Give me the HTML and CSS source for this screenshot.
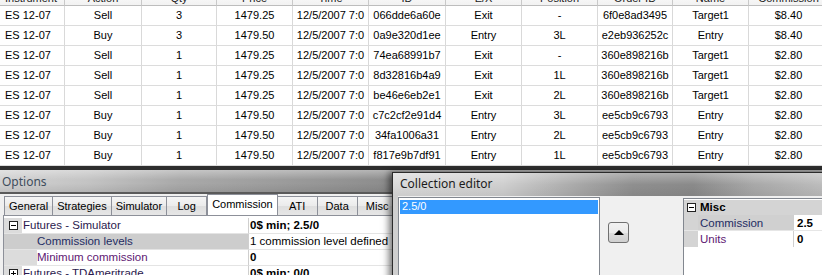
FILE: index.html
```html
<!DOCTYPE html>
<html>
<head>
<meta charset="utf-8">
<link rel="stylesheet" href="styles.css">
</head>
<body>
<div class="list">
  <div class="lrow lhead">
    <span class="l">Instrument</span><span>Action</span><span>Qty</span><span>Price</span><span>Time</span><span>ID</span><span>E/X</span><span>Position</span><span>Order ID</span><span>Name</span><span>Commission</span>
  </div>
  <div class="lrow"><span class="l">ES 12-07</span><span>Sell</span><span>3</span><span>1479.25</span><span>12/5/2007 7:0</span><span>066dde6a60e</span><span>Exit</span><span>-</span><span>6f0e8ad3495</span><span>Target1</span><span>$8.40</span></div>
  <div class="lrow"><span class="l">ES 12-07</span><span>Buy</span><span>3</span><span>1479.50</span><span>12/5/2007 7:0</span><span>0a9e320d1ee</span><span>Entry</span><span>3L</span><span>e2eb936252c</span><span>Entry</span><span>$8.40</span></div>
  <div class="lrow"><span class="l">ES 12-07</span><span>Sell</span><span>1</span><span>1479.25</span><span>12/5/2007 7:0</span><span>74ea68991b7</span><span>Exit</span><span>-</span><span>360e898216b</span><span>Target1</span><span>$2.80</span></div>
  <div class="lrow"><span class="l">ES 12-07</span><span>Sell</span><span>1</span><span>1479.25</span><span>12/5/2007 7:0</span><span>8d32816b4a9</span><span>Exit</span><span>1L</span><span>360e898216b</span><span>Target1</span><span>$2.80</span></div>
  <div class="lrow"><span class="l">ES 12-07</span><span>Sell</span><span>1</span><span>1479.25</span><span>12/5/2007 7:0</span><span>be46e6eb2e1</span><span>Exit</span><span>2L</span><span>360e898216b</span><span>Target1</span><span>$2.80</span></div>
  <div class="lrow"><span class="l">ES 12-07</span><span>Buy</span><span>1</span><span>1479.50</span><span>12/5/2007 7:0</span><span>c7c2cf2e91d4</span><span>Entry</span><span>3L</span><span>ee5cb9c6793</span><span>Entry</span><span>$2.80</span></div>
  <div class="lrow"><span class="l">ES 12-07</span><span>Buy</span><span>1</span><span>1479.50</span><span>12/5/2007 7:0</span><span>34fa1006a31</span><span>Entry</span><span>2L</span><span>ee5cb9c6793</span><span>Entry</span><span>$2.80</span></div>
  <div class="lrow"><span class="l">ES 12-07</span><span>Buy</span><span>1</span><span>1479.50</span><span>12/5/2007 7:0</span><span>f817e9b7df91</span><span>Entry</span><span>1L</span><span>ee5cb9c6793</span><span>Entry</span><span>$2.80</span></div>
</div>

<div class="desk">
  <section class="options">
    <div class="otitle">Options</div>
    <div class="tabs">
      <span class="tab">General</span>
      <span class="tab">Strategies</span>
      <span class="tab">Simulator</span>
      <span class="tab">Log</span>
      <span class="tab sel">Commission</span>
      <span class="tab">ATI</span>
      <span class="tab">Data</span>
      <span class="tab">Misc</span>
    </div>
    <div class="pgrid">
      <div class="prow cat">
        <span class="pm"><i class="box"></i></span>
        <span class="pl">Futures - Simulator</span>
        <span class="pv b">0$ min; 2.5/0</span>
      </div>
      <div class="prow sub selrow">
        <span class="pm"></span>
        <span class="pl">Commission levels</span>
        <span class="pv">1 commission level defined</span>
      </div>
      <div class="prow sub">
        <span class="pm"></span>
        <span class="pl">Minimum commission</span>
        <span class="pv b">0</span>
      </div>
      <div class="prow cat">
        <span class="pm"><i class="box plus"></i></span>
        <span class="pl">Futures - TDAmeritrade</span>
        <span class="pv b">0$ min; 0/0</span>
      </div>
    </div>
  </section>

  <section class="coll">
    <div class="ctitle">Collection editor</div>
    <div class="cbody">
      <div class="clist">
        <div class="citem">2.5/0</div>
      </div>
      <div class="cmid">
        <button class="upbtn" type="button"><span class="tri"></span></button>
      </div>
      <div class="cgrid">
        <div class="crow ccat">
          <span class="cm"><i class="box"></i></span>
          <span class="cl b">Misc</span>
        </div>
        <div class="crow csel">
          <span class="cm"></span>
          <span class="cl">Commission</span>
          <span class="cv b">2.5</span>
        </div>
        <div class="crow">
          <span class="cm"></span>
          <span class="cl">Units</span>
          <span class="cv b">0</span>
        </div>
      </div>
    </div>
  </section>
</div>
</body>
</html>
```

FILE: styles.css
```css
* { box-sizing: border-box; margin: 0; padding: 0; }
html, body { width: 822px; height: 275px; overflow: hidden; background: #fff; }
body {
  font-family: "Liberation Sans", Arial, sans-serif;
  font-size: 11px;
  color: #000;
}

/* ---------- trade list ---------- */
.list { display: flex; flex-direction: column; margin-top: -13px; }
.lrow {
  display: grid;
  grid-template-columns: 65px 77px 75px 76px 76px 77px 76px 76px 75px 76px 80px;
  height: 20px;
}
.lrow > span {
  border-right: 1px solid #d9d9d9;
  border-bottom: 1px solid #dcdcdc;
  line-height: 19px;
  text-align: center;
  white-space: nowrap;
  overflow: hidden;
}
.lrow > span.l { text-align: left; padding-left: 5px; }
.lhead { height: 19px; }
.lhead > span {
  background: linear-gradient(#ffffff, #f2f2f2);
  border-right-color: #c9c9c9;
  border-bottom: 1px solid #bdbdbd;
  line-height: 23px;
  color: #222;
}

/* ---------- desktop area ---------- */
.desk { position: relative; height: 109px; }

.options {
  height: 100%;
  background: #f0f0f0;
  border-top: 4px solid #2e2e2e;
  display: flex;
  flex-direction: column;
}
.otitle {
  height: 24px;
  line-height: 23px;
  padding-left: 2px;
  font-family: "Noto Sans", "Open Sans", sans-serif;
  font-size: 12px;
  color: #3f4d5c;
  background:
    linear-gradient(rgba(255,255,255,.35), rgba(255,255,255,0) 45%, rgba(0,0,0,0) 60%, rgba(0,0,0,.08)),
    linear-gradient(to right, #d2d2d2 0, #c3c3c3 90px, #a9a9a9 180px, #9c9c9c 280px, #8c8c8c 392px);
  border-bottom: 2px solid #5a5a5a;
}
.tabs {
  display: flex;
  align-items: flex-end;
  height: 23px;
  padding-left: 4px;
}
.tab {
  height: 19px;
  min-width: 40px;
  padding: 0 4px;
  line-height: 18px;
  text-align: center;
  white-space: nowrap;
  border: 1px solid #8d9099;
  border-bottom: none;
  border-left-width: 0;
  background: linear-gradient(#f5f5f5, #ebebeb 50%, #dedede 51%, #e6e6e6);
}
.tab:first-child { border-left-width: 1px; }
.tab.sel {
  height: 21px;
  line-height: 18px;
  background: #fff;
  border-left-width: 1px;
  padding-bottom: 2px;
  position: relative;
  z-index: 1;
}
.pgrid {
  margin-left: 3px;
  border: 1px solid #8d9099;
  background: #fff;
  padding-top: 2px;
  flex: 1;
  font-size: 11.5px;
}
.prow {
  display: grid;
  grid-template-columns: 18px 226px 1fr;
  height: 16px;
  line-height: 15px;
}
.prow > span { border-bottom: 1px solid #e4e4e4; white-space: nowrap; overflow: hidden; }
.pm { background: #dcdcdc; display: flex; align-items: center; justify-content: center; }
.pl { padding-left: 1px; color: #2b1a4e; }
.pv { border-left: 1px solid #cfcfcf; padding-left: 1px; }
.sub .pl { padding-left: 15px; color: #5e1873; }
.sub .pm { width: 33px; }
.selrow .pm, .selrow .pl { background: #cdcdcd; }
.selrow .pl { color: #1f2c63; }
.b { font-weight: bold; }

.box {
  display: block;
  width: 9px;
  height: 9px;
  border: 1px solid #222;
  background: #fff;
  position: relative;
}
.box::after {
  content: "";
  position: absolute;
  left: 1px; right: 1px; top: 3px;
  height: 1px;
  background: #000;
}
.box.plus::before {
  content: "";
  position: absolute;
  top: 1px; bottom: 1px; left: 3px;
  width: 1px;
  background: #000;
}

/* ---------- collection editor (floating window) ---------- */
.coll {
  position: absolute;
  left: 392px;
  top: 6px;
  width: 440px;
  height: 110px;
  border: 1px solid #2b2b2b;
  background: #f0f0f0;
  box-shadow: -3px 0 7px rgba(0,0,0,.55);
  display: flex;
  flex-direction: column;
}
.ctitle {
  height: 23px;
  line-height: 22px;
  padding-left: 7px;
  font-family: "Noto Sans", "Open Sans", sans-serif;
  font-size: 12px;
  color: #1c1c1c;
  background:
    linear-gradient(rgba(255,255,255,.3), rgba(255,255,255,0) 50%, rgba(0,0,0,.06)),
    linear-gradient(to right, #dadada 0, #cfcfcf 110px, #a6a6a6 190px, #8f8f8f 240px, #8a8a8a 300px, #a8a8a8 360px, #bdbdbd 430px);
}
.cbody {
  flex: 1;
  display: flex;
  padding: 1px 0 0 5px;
  background: linear-gradient(to right, #cfcfcf 0, #cfcfcf 5px, #f0f0f0 5px);
}
.clist {
  width: 202px;
  border: 1px solid #82878f;
  background: #fff;
  padding: 2px 1px 0;
}
.citem {
  height: 14px;
  line-height: 13px;
  padding-left: 2px;
  background: #3399ff;
  color: #fff;
}
.cmid {
  width: 83px;
  padding: 25px 0 0 8px;
}
.upbtn {
  display: flex;
  align-items: center;
  justify-content: center;
  width: 21px;
  height: 21px;
  border: 1px solid #707070;
  border-radius: 3px;
  background: linear-gradient(#f2f2f2, #ebebeb 50%, #dddddd 51%, #cfcfcf);
}
.tri {
  width: 0; height: 0;
  border-left: 5px solid transparent;
  border-right: 5px solid transparent;
  border-bottom: 5px solid #000;
}
.cgrid {
  flex: 1;
  margin-top: 1px;
  border-left: 1px solid #82878f;
  border-top: 1px solid #82878f;
  background: #fff;
  padding-top: 1px;
}
.crow {
  display: grid;
  grid-template-columns: 14px 95px 1fr;
  height: 16px;
  line-height: 16px;
  font-size: 11.5px;
}
.crow > span { white-space: nowrap; overflow: hidden; }
.cm { background: #d4d4d4; display: flex; align-items: center; justify-content: center; }
.cl { padding-left: 2px; color: #5e1873; }
.cv { border-left: 1px solid #cfcfcf; padding-left: 3px; }
.ccat { background: #d4d4d4; height: 15px; line-height: 15px; }
.ccat .cl { color: #000; grid-column: 2 / 4; }
.csel .cl { background: #d0d0d0; color: #1f2c63; }
.csel { border-bottom: 1px solid #e6e6e6; }
```
